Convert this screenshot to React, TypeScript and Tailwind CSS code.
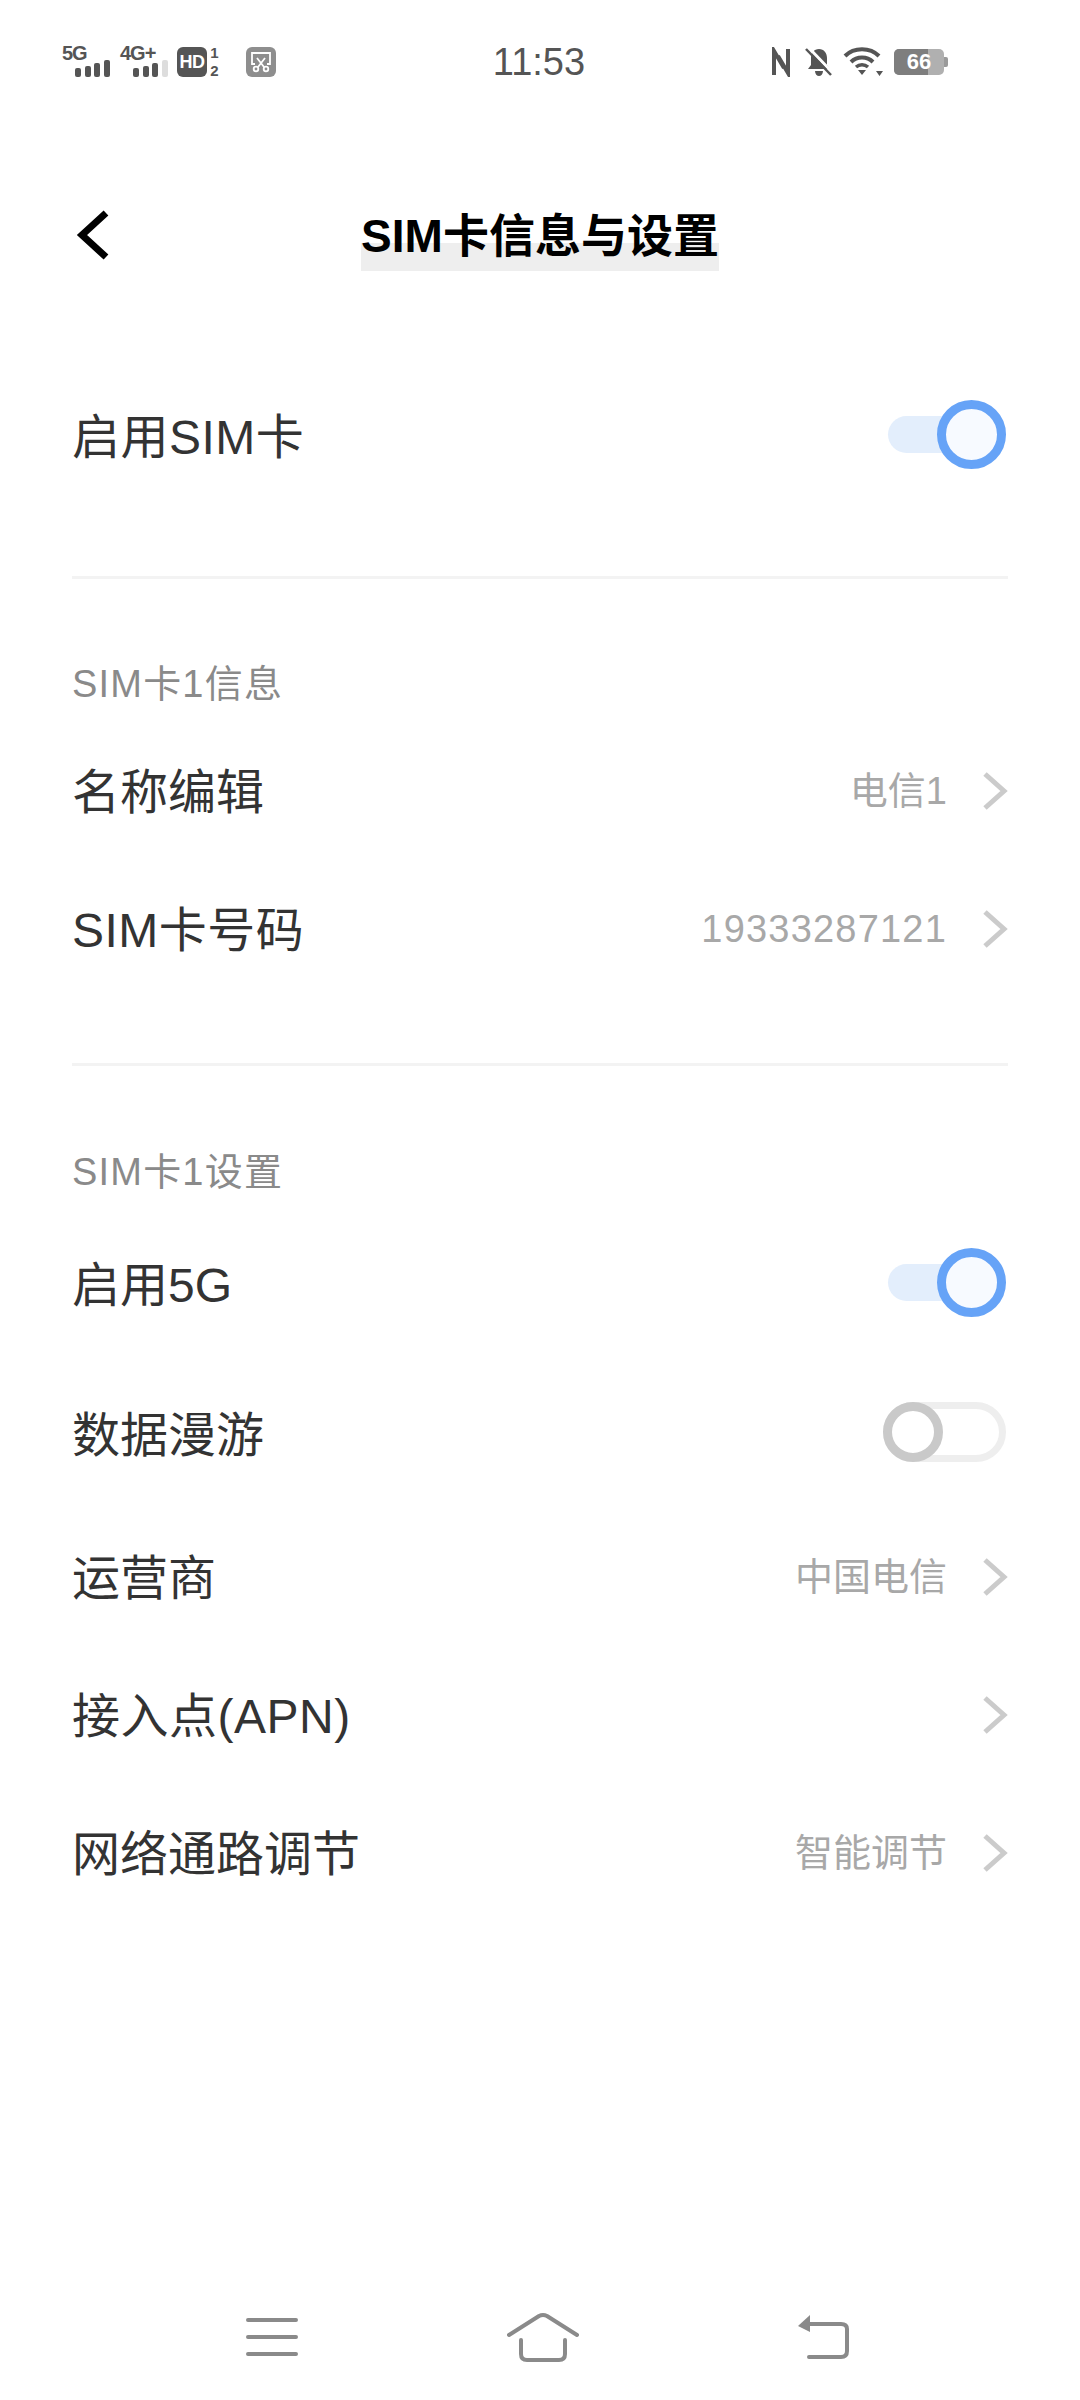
import React from 'react';

const FONT = '[font-family:"Liberation_Sans","Noto_Sans_CJK_SC",sans-serif]';

// ── status bar bits ──
function Bars({ dim = false }: { dim?: boolean }) {
  return (
    <div className="flex items-end gap-[3.5px]">
      <div className="w-[6px] h-[9px] rounded-[2px] bg-[#555]" />
      <div className="w-[6px] h-[11px] rounded-[2px] bg-[#555]" />
      <div className="w-[6px] h-[14px] rounded-[2px] bg-[#555]" />
      <div className={`w-[6px] h-[17px] rounded-[2px] ${dim ? 'bg-[#ddd]' : 'bg-[#555]'}`} />
    </div>
  );
}

function Signal({ label, dim }: { label: string; dim?: boolean }) {
  return (
    <div className="relative w-[50px] h-[32px] mb-[2px]">
      <span className="absolute left-0 top-[-2px] text-[20px] leading-[20px] font-bold text-[#555] tracking-[-1px]">{label}</span>
      <div className="absolute left-[13px] bottom-0">
        <Bars dim={dim} />
      </div>
    </div>
  );
}

function StatusBar() {
  return (
    <div className="h-[124px] flex items-center pl-[62px] pr-[132px] relative">
      <div className="flex items-center">
        <Signal label="5G" />
        <div className="ml-[8px]"><Signal label="4G+" dim /></div>
        <div className="ml-[7px] w-[30px] h-[30px] rounded-[6px] bg-[#555] flex items-center justify-center text-white font-bold leading-none">
          <span className="text-[18px] tracking-[-0.5px]">HD</span>
        </div>
        <div className="ml-[2px] w-[11px] flex flex-col items-center text-[#555] text-[15px] font-bold leading-[18px]">
          <span>1</span>
          <span>2</span>
        </div>
        <div className="ml-[26px] w-[30px] h-[30px] rounded-[6px] bg-[#8e8e8e] flex items-center justify-center">
          <svg width="24" height="24" viewBox="0 0 24 24" fill="none" stroke="#fff" strokeWidth="1.8">
            <path d="M6 14H3V3h18v11h-3" />
            <path d="M8 8l7 9M16 8l-7 9" />
            <circle cx="7" cy="19" r="2.300" />
            <circle cx="17" cy="19" r="2.300" />
          </svg>
        </div>
      </div>
      <span className="absolute left-[491px] w-[96px] text-center text-[38px] text-[#555] leading-none">11:53</span>
      <div className="ml-auto flex items-center">
        <svg width="20" height="30" viewBox="0 0 20 30" fill="none" stroke="#555" strokeWidth="4">
          <path d="M3 28V4l10 17" />
          <path d="M17 2v24L7 9" />
        </svg>
        <svg className="ml-[13px]" width="30" height="30" viewBox="0 0 30 30">
          <path d="M15 2c5 0 8 4 8 9v7l3 4H4l3-4v-7c0-5 3-9 8-9zM11 24h8c0 3-2 5-4 5s-4-2-4-5z" fill="#555" />
          <path d="M4 0l25 26" stroke="#fff" strokeWidth="3" />
          <path d="M2 2l25 26" stroke="#555" strokeWidth="2.500" />
        </svg>
        <svg className="ml-[9px]" width="42" height="30" viewBox="0 0 42 30" fill="none">
          <path d="M2 9c9-9 25-9 34 0" stroke="#555" strokeWidth="4" />
          <path d="M8 15c6-6 16-6 22 0" stroke="#555" strokeWidth="4" />
          <path d="M13 20c3.500-3 8.500-3 12 0" stroke="#555" strokeWidth="3.500" />
          <path d="M15 23h8l-4 5zM33 24h7l-3.500 5z" fill="#555" />
        </svg>
        <div className="ml-[9px] relative w-[50px] h-[26px] rounded-[5px] overflow-hidden bg-[#b0b0b0]">
          <div className="w-[34px] h-full bg-[#7e7e7e]" />
          <span className="absolute inset-0 flex items-center justify-center text-white text-[22px] font-bold leading-none">66</span>
        </div>
        <div className="w-[4px] h-[10px] rounded-r-[2px] bg-[#9a9a9a]" />
      </div>
    </div>
  );
}

// ── settings bits ──
function Toggle({ on }: { on: boolean }) {
  if (on) {
    return (
      <div className="relative w-[118px] h-[69px] mb-[3px] mr-[2px] flex items-center">
        <div className="w-[80px] h-[37px] rounded-l-full bg-[#e3eefc]" />
        <div className="absolute right-0 top-0 w-[69px] h-[69px] rounded-full border-[9px] border-[#66a3f7] bg-[#f7faff]" />
      </div>
    );
  }
  return (
    <div className="relative w-[123px] h-[60px] mb-[3px] mr-[2px] rounded-full border-[7px] border-[#eeeeee] bg-white">
      <div className="absolute left-[-7px] top-[-7px] w-[60px] h-[60px] rounded-full border-[9px] border-[#c9c9c9] bg-white" />
    </div>
  );
}

function Chevron() {
  return (
    <svg width="26" height="40" viewBox="0 0 26 40" fill="none" stroke="#cbcbcb" strokeWidth="5">
      <path d="M3 3l19 17L3 37" />
    </svg>
  );
}

function Row({ label, value, h = 'h-[138px]', latin }: { label: string; value?: string; h?: string; latin?: boolean }) {
  const digits = value && /^\d+$/.test(value);
  return (
    <div className={`${h} flex items-center justify-between`}>
      <span className={`mt-[4px] text-[48px] leading-none text-[#333] ${latin ? 'tracking-[0.5px]' : ''}`}>{label}</span>
      <div className="flex items-center">
        {value && <span className={`text-[38px] leading-none text-[#a8a8a8] ${digits ? 'tracking-[1.2px]' : ''}`}>{value}</span>}
        <div className="ml-[35px]"><Chevron /></div>
      </div>
    </div>
  );
}

function ToggleRow({ label, on, h, latin }: { label: string; on: boolean; h: string; latin?: boolean }) {
  return (
    <div className={`${h} flex items-center justify-between`}>
      <span className={`mt-[4px] text-[48px] leading-none text-[#333] ${latin ? 'tracking-[0.5px]' : ''}`}>{label}</span>
      <Toggle on={on} />
    </div>
  );
}

function SectionLabel({ children }: { children: React.ReactNode }) {
  return <div className="h-[60px] flex items-center text-[38px] leading-none tracking-[1.2px] text-[#8a8a8a]">{children}</div>;
}

function NavBar() {
  return (
    <div className="mt-auto h-[130px] pt-[4px] flex items-center justify-between pl-[246px] pr-[231px]">
      <svg width="52" height="38" viewBox="0 0 52 38" fill="none" stroke="#8a8a8a" strokeWidth="4" strokeLinecap="round">
        <path d="M2 2h48M2 19h48M2 36h48" />
      </svg>
      <svg className="mr-[9px]" width="72" height="50" viewBox="0 0 72 50" fill="none" stroke="#8a8a8a" strokeWidth="4" strokeLinecap="round" strokeLinejoin="round">
        <path d="M2 23L32 4q4-2 8 0l30 19" />
        <path d="M14 28v14q0 6 6 6h32q6 0 6-6V28" />
      </svg>
      <svg width="52" height="46" viewBox="0 0 52 46" fill="none" stroke="#8a8a8a" strokeWidth="4" strokeLinecap="round" strokeLinejoin="round">
        <path d="M10 10h34q6 0 6 5v22q0 6-6 6H12" />
        <path d="M13 1v17L1 12z" fill="#8a8a8a" stroke="none" />
      </svg>
    </div>
  );
}

export default function App() {
  return (
    <div className={`w-[1080px] h-[2400px] bg-white flex flex-col ${FONT}`}>
      <StatusBar />

      {/* Header */}
      <div className="h-[224px] relative flex items-center justify-center">
        <svg className="absolute left-[76px] top-[86px]" width="34" height="50" viewBox="0 0 34 50" fill="none" stroke="#000" strokeWidth="7">
          <path d="M30 3L6 25l24 22" />
        </svg>
        <div className="relative">
          <div className="absolute left-0 right-0 bottom-[-7px] h-[28px] bg-[#eeeeee]" />
          <span className="relative block text-[46px] leading-[56px] font-bold text-black whitespace-nowrap">SIM卡信息与设置</span>
        </div>
      </div>

      <div className="px-[72px]">
        <ToggleRow label="启用SIM卡" latin on h="h-[176px]" />
        <div className="mt-[52px] h-[3px] bg-[#f3f3f3]" />

        <div className="mt-[75px]"><SectionLabel>SIM卡1信息</SectionLabel></div>
        <div className="mt-[8px]">
          <Row label="名称编辑" value="电信1" />
          <Row label="SIM卡号码" latin value="19333287121" />
        </div>
        <div className="mt-[65px] h-[3px] bg-[#f3f3f3]" />

        <div className="mt-[76px]"><SectionLabel>SIM卡1设置</SectionLabel></div>
        <div className="mt-[7px]">
          <ToggleRow label="启用5G" on h="h-[150px]" />
          <ToggleRow label="数据漫游" on={false} h="h-[149px]" />
          <Row label="运营商" value="中国电信" />
          <Row label="接入点(APN)" latin />
          <Row label="网络通路调节" value="智能调节" />
        </div>
      </div>

      <NavBar />
    </div>
  );
}
